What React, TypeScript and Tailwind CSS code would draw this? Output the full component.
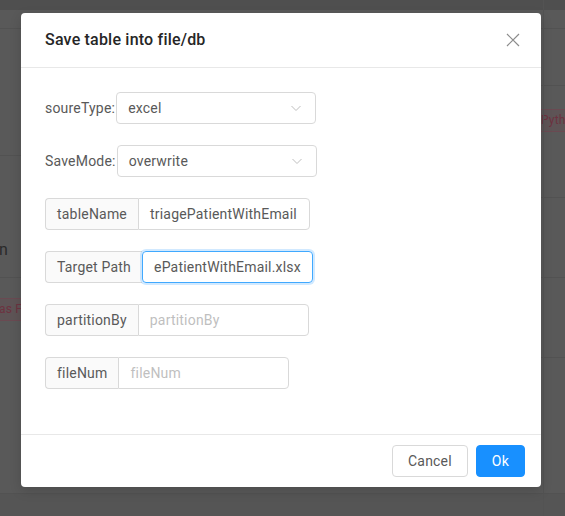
import React from 'react';

function Chevron() {
    return (
        <svg width="12" height="12" viewBox="0 0 12 12" fill="none" className="shrink-0">
            <path d="M1.5 4 L6 8.5 L10.5 4" stroke="#bfbfbf" strokeWidth="1" />
        </svg>
    );
}

function SelectRow({ label, value, width }: { label: string; value: string; width: string }) {
    return (
        <div className="flex items-center h-8">
            <span className="text-[14px] text-[#595959] pr-[1px]">{label}</span>
            <div className={`flex items-center justify-between h-8 ${width} border border-[#d9d9d9] rounded-[4px] bg-white pl-[11px] pr-[13px]`}>
                <span className="text-[14px] text-[#595959]">{value}</span>
                <Chevron />
            </div>
        </div>
    );
}

function InputRow({
    addon,
    value,
    placeholder,
    inputWidth,
    focused
}: {
    addon: string;
    value?: string;
    placeholder?: string;
    inputWidth: string;
    focused?: boolean;
}) {
    return (
        <div className="flex h-8">
            <div className="flex items-center px-[11px] bg-[#fafafa] border border-[#d9d9d9] border-r-0 rounded-l-[4px] text-[14px] text-[#595959]">
                {addon}
            </div>
            <div
                className={`flex items-center ${inputWidth} px-[11px] rounded-r-[4px] text-[14px] overflow-hidden whitespace-nowrap ${
                    focused
                        ? 'border border-[#40a9ff] shadow-[0_0_0_2px_rgba(24,144,255,0.2)] rounded-l-[4px]'
                        : 'border border-[#d9d9d9]'
                }`}
            >
                {value ? (
                    <span className="text-[#595959]">{value}</span>
                ) : (
                    <span className="text-[#bfbfbf]">{placeholder}</span>
                )}
            </div>
        </div>
    );
}

export default function App() {
    return (
        <div
            className="relative w-[565px] h-[516px] overflow-hidden bg-[#595959] tracking-[0.2px]"
            style={{ fontFamily: 'Roboto, "Liberation Sans", sans-serif' }}
        >
            {/* dimmed page behind the modal */}
            <div className="absolute left-0 top-0 w-full h-[10px] bg-[#4f4f4f]" />
            <div className="absolute left-0 top-[28px] w-full h-px bg-[#525252]" />
            <div className="absolute right-0 top-[85px] w-[30px] h-px bg-[#525252]" />
            <div className="absolute left-0 top-[155px] w-[30px] h-px bg-[#525252]" />
            <div className="absolute right-0 top-[197px] w-[30px] h-px bg-[#525252]" />
            <div className="absolute left-0 top-[277px] w-full h-px bg-[#525252]" />
            <div className="absolute right-0 top-[357px] w-[30px] h-px bg-[#525252]" />
            <div className="absolute left-0 top-[493px] w-full h-px bg-[#525252]" />
            <div className="absolute left-0 top-[494px] w-full h-[22px] bg-[#555555]" />
            <div className="absolute left-[-1px] top-[238px] text-[16px] text-[#2a2a2a]">n</div>
            <div className="absolute left-[-8px] top-[298px] h-[23px] px-[6px] border border-[#6a4a52] bg-[#5e5456] rounded-[3px] text-[12px] leading-[21px] text-[#6d3240]">
                as Fu
            </div>
            <div className="absolute left-[537px] top-[109px] h-[23px] px-[3px] border border-[#6a4a52] bg-[#5e5456] rounded-[3px] text-[12px] leading-[21px] text-[#6d3240]">
                Pyth
            </div>
            <div className="absolute left-[543px] top-[0px] w-px h-full bg-[#535353]" />

            {/* modal */}
            <div className="absolute left-[21px] top-[13px] w-[520px] bg-white rounded-[4px] shadow-[0_4px_12px_rgba(0,0,0,0.15)] flex flex-col">
                <div className="flex items-center justify-between h-[55px] px-6 border-b border-[#e8e8e8]">
                    <span className="text-[16px] font-medium text-[#262626] leading-[22px]">Save table into file/db</span>
                    <svg width="14" height="14" viewBox="0 0 14 14" className="mr-[-3px]">
                        <path d="M1 1 L13 13 M13 1 L1 13" stroke="#8c8c8c" strokeWidth="1.2" />
                    </svg>
                </div>
                <div className="flex flex-col gap-[21px] px-6 pt-6 pb-[45px]">
                    <SelectRow label="soureType:" value="excel" width="w-[200px]" />
                    <SelectRow label="SaveMode:" value="overwrite" width="w-[200px]" />
                    <InputRow addon="tableName" value="triagePatientWithEmail" inputWidth="w-[172px]" />
                    <InputRow addon="Target Path" value="ePatientWithEmail.xlsx" inputWidth="w-[171px]" focused />
                    <InputRow addon="partitionBy" placeholder="partitionBy" inputWidth="w-[171px]" />
                    <InputRow addon="fileNum" placeholder="fileNum" inputWidth="w-[171px]" />
                </div>
                <div className="flex justify-end gap-2 px-4 py-[10px] border-t border-[#e8e8e8]">
                    <button className="h-8 px-[15px] border border-[#d9d9d9] rounded-[4px] bg-white text-[14px] text-[#595959]">
                        Cancel
                    </button>
                    <button className="h-8 px-[15px] border border-[#1890ff] rounded-[4px] bg-[#1890ff] text-[14px] text-white">
                        Ok
                    </button>
                </div>
            </div>
        </div>
    );
}
